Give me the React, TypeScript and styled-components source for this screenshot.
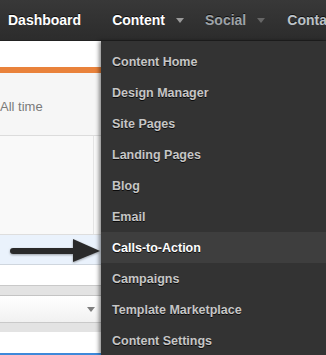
import styled, { createGlobalStyle } from 'styled-components';

const menuItems = [
  'Content Home',
  'Design Manager',
  'Site Pages',
  'Landing Pages',
  'Blog',
  'Email',
  'Calls-to-Action',
  'Campaigns',
  'Template Marketplace',
  'Content Settings',
];

const GlobalStyle = createGlobalStyle`
  html, body {
    margin: 0;
    padding: 0;
    background: #333;
    overflow: hidden;
  }
  body {
    font-family: "Liberation Sans", Arial, Helvetica, sans-serif;
  }
`;

const Page = styled.div`
  width: 326px;
  height: 355px;
  overflow: hidden;
  display: flex;
  flex-direction: column;
`;

const TopNav = styled.nav`
  height: 40px;
  flex-shrink: 0;
  display: flex;
  align-items: center;
  padding-left: 8px;
  background: linear-gradient(#383838, #2c2c2c);
  border-bottom: 1px solid #222;
  white-space: nowrap;
`;

const NavItem = styled.span<{ $tone: 'white' | 'dim' | 'light'; $gap: number }>`
  display: flex;
  align-items: center;
  margin-right: ${p => p.$gap}px;
  font-size: 14px;
  font-weight: bold;
  color: ${p => (p.$tone === 'white' ? '#fff' : p.$tone === 'dim' ? '#9ea3a8' : '#bcc2c8')};
  text-shadow: 0 -1px 0 rgba(0, 0, 0, 0.7);
`;

const Caret = styled.span<{ $color: string }>`
  width: 0;
  height: 0;
  margin-left: 11px;
  margin-top: 1px;
  border-left: 4px solid transparent;
  border-right: 4px solid transparent;
  border-top: 5px solid ${p => p.$color};
`;

const Body = styled.div`
  flex: 1;
  display: flex;
  min-height: 0;
`;

const LeftPanel = styled.div`
  width: 101px;
  flex-shrink: 0;
  display: flex;
  flex-direction: column;
  background: #fff;
`;

const PanelHeader = styled.div`
  height: 26px;
  background: #fff;
  border-bottom: 6px solid #e9823b;
`;

const FilterArea = styled.div`
  height: 58px;
  display: flex;
  align-items: center;
  padding-top: 4px;
  background: #f6f6f6;
  border-bottom: 1px solid #dcdcdc;
  font-size: 13px;
  color: #7a7a7a;
`;

const TableArea = styled.div`
  height: 98px;
  display: flex;
  background: #f9f9f9;
  border-bottom: 1px solid #dedede;
`;

const Column = styled.div`
  width: 93px;
  border-right: 1px solid #e4e4e4;
`;

const ArrowRow = styled.div`
  height: 29px;
  display: flex;
  align-items: center;
  background: #eaf2fc;
  border-bottom: 1px solid #cfd6de;
`;

const WhiteRow = styled.div<{ $h: number }>`
  height: ${p => p.$h}px;
  background: #fff;
`;

const GreyBand = styled.div`
  height: 9px;
  background: #e3e3e3;
  border-top: 1px solid #c9c9c9;
`;

const SelectBox = styled.div`
  height: 26px;
  display: flex;
  align-items: center;
  justify-content: flex-end;
  padding-right: 6px;
  background: linear-gradient(#fff, #f1f1f1);
  border-top: 1px solid #c4c4c4;
`;

const SelectCaret = styled.span`
  width: 0;
  height: 0;
  border-left: 4px solid transparent;
  border-right: 4px solid transparent;
  border-top: 5px solid #7e7e7e;
`;

const BlueBar = styled.div`
  flex: 1;
  background: #3d89da;
`;

const Menu = styled.ul`
  flex: 1;
  margin: 0;
  padding: 5px 0 0;
  list-style: none;
  background: #333;
  box-shadow: -2px 0 4px rgba(0, 0, 0, 0.45);
  position: relative;
  z-index: 1;
`;

const MenuItem = styled.li<{ $active?: boolean }>`
  height: 31px;
  display: flex;
  align-items: center;
  padding-left: 11px;
  font-size: 12.5px;
  font-weight: bold;
  white-space: nowrap;
  color: ${p => (p.$active ? '#fff' : '#c6c6c6')};
  background: ${p => (p.$active ? '#3e3e3e' : 'transparent')};
  text-shadow: 0 1px 0 rgba(0, 0, 0, 0.8);
`;

function Arrow() {
  return (
    <svg width="101" height="29" viewBox="0 0 101 29">
      <defs>
        <filter id="sh" x="-10%" y="-30%" width="120%" height="160%">
          <feDropShadow dx="0" dy="1" stdDeviation="1" floodColor="#000" floodOpacity="0.35" />
        </filter>
      </defs>
      <g filter="url(#sh)" fill="#2b2b2b">
        <rect x="10" y="13" width="66" height="6" rx="3" />
        <polygon points="73,4 100,16 73,27" />
      </g>
    </svg>
  );
}

export default function App() {
  return (
    <>
      <GlobalStyle />
      <Page>
        <TopNav>
          <NavItem $tone="white" $gap={31}>Dashboard</NavItem>
          <NavItem $tone="white" $gap={21}>
            Content<Caret $color="#9a9a9a" />
          </NavItem>
          <NavItem $tone="dim" $gap={22}>
            Social<Caret $color="#666" />
          </NavItem>
          <NavItem $tone="light" $gap={0}>Contacts</NavItem>
        </TopNav>
        <Body>
          <LeftPanel>
            <PanelHeader />
            <FilterArea>All time</FilterArea>
            <TableArea>
              <Column />
            </TableArea>
            <ArrowRow>
              <Arrow />
            </ArrowRow>
            <WhiteRow $h={20} />
            <GreyBand />
            <SelectBox>
              <SelectCaret />
            </SelectBox>
            <GreyBand />
            <WhiteRow $h={21} />
            <BlueBar />
          </LeftPanel>
          <Menu>
            {menuItems.map(item => (
              <MenuItem key={item} $active={item === 'Calls-to-Action'}>
                {item}
              </MenuItem>
            ))}
          </Menu>
        </Body>
      </Page>
    </>
  );
}
